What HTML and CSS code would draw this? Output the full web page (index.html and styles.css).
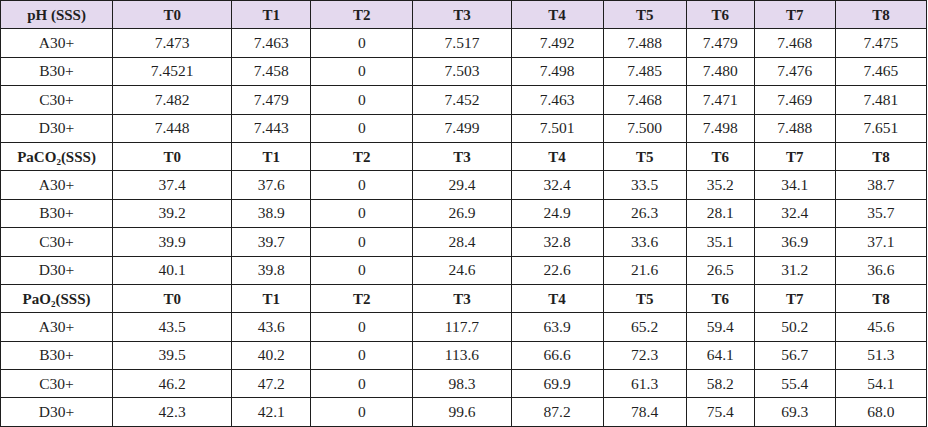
FILE: index.html
```html
<!DOCTYPE html>
<html>
<head>
<meta charset="utf-8">
<link rel="stylesheet" href="styles.css">
</head>
<body>
<table class="data">
<colgroup>
<col class="c0"><col class="c1"><col class="c2"><col class="c3"><col class="c4"><col class="c5"><col class="c6"><col class="c7"><col class="c8"><col class="c9">
</colgroup>
<tbody>
<tr class="head lav"><th>pH (SSS)</th><th>T0</th><th>T1</th><th>T2</th><th>T3</th><th>T4</th><th>T5</th><th>T6</th><th>T7</th><th>T8</th></tr>
<tr><td>A30+</td><td>7.473</td><td>7.463</td><td>0</td><td>7.517</td><td>7.492</td><td>7.488</td><td>7.479</td><td>7.468</td><td>7.475</td></tr>
<tr><td>B30+</td><td>7.4521</td><td>7.458</td><td>0</td><td>7.503</td><td>7.498</td><td>7.485</td><td>7.480</td><td>7.476</td><td>7.465</td></tr>
<tr><td>C30+</td><td>7.482</td><td>7.479</td><td>0</td><td>7.452</td><td>7.463</td><td>7.468</td><td>7.471</td><td>7.469</td><td>7.481</td></tr>
<tr><td>D30+</td><td>7.448</td><td>7.443</td><td>0</td><td>7.499</td><td>7.501</td><td>7.500</td><td>7.498</td><td>7.488</td><td>7.651</td></tr>
<tr class="head"><th>PaCO<sub>2</sub>(SSS)</th><th>T0</th><th>T1</th><th>T2</th><th>T3</th><th>T4</th><th>T5</th><th>T6</th><th>T7</th><th>T8</th></tr>
<tr><td>A30+</td><td>37.4</td><td>37.6</td><td>0</td><td>29.4</td><td>32.4</td><td>33.5</td><td>35.2</td><td>34.1</td><td>38.7</td></tr>
<tr><td>B30+</td><td>39.2</td><td>38.9</td><td>0</td><td>26.9</td><td>24.9</td><td>26.3</td><td>28.1</td><td>32.4</td><td>35.7</td></tr>
<tr><td>C30+</td><td>39.9</td><td>39.7</td><td>0</td><td>28.4</td><td>32.8</td><td>33.6</td><td>35.1</td><td>36.9</td><td>37.1</td></tr>
<tr><td>D30+</td><td>40.1</td><td>39.8</td><td>0</td><td>24.6</td><td>22.6</td><td>21.6</td><td>26.5</td><td>31.2</td><td>36.6</td></tr>
<tr class="head"><th>PaO<sub>2</sub>(SSS)</th><th>T0</th><th>T1</th><th>T2</th><th>T3</th><th>T4</th><th>T5</th><th>T6</th><th>T7</th><th>T8</th></tr>
<tr><td>A30+</td><td>43.5</td><td>43.6</td><td>0</td><td>117.7</td><td>63.9</td><td>65.2</td><td>59.4</td><td>50.2</td><td>45.6</td></tr>
<tr><td>B30+</td><td>39.5</td><td>40.2</td><td>0</td><td>113.6</td><td>66.6</td><td>72.3</td><td>64.1</td><td>56.7</td><td>51.3</td></tr>
<tr><td>C30+</td><td>46.2</td><td>47.2</td><td>0</td><td>98.3</td><td>69.9</td><td>61.3</td><td>58.2</td><td>55.4</td><td>54.1</td></tr>
<tr><td>D30+</td><td>42.3</td><td>42.1</td><td>0</td><td>99.6</td><td>87.2</td><td>78.4</td><td>75.4</td><td>69.3</td><td>68.0</td></tr>
</tbody>
</table>
</body>
</html>
```
FILE: styles.css
```css
html, body {
  margin: 0;
  padding: 0;
  background: #ffffff;
}
body {
  font-family: "Liberation Serif", "DejaVu Serif", serif;
  color: #1f1f1f;
}
.data {
  border-collapse: collapse;
  table-layout: fixed;
  width: 927px;
  margin-left: 0;
}
.c0 { width: 112px; }
.c1 { width: 119px; }
.c2 { width: 79px; }
.c3 { width: 102px; }
.c4 { width: 98px; }
.c5 { width: 92px; }
.c6 { width: 83px; }
.c7 { width: 68px; }
.c8 { width: 81px; }
.c9 { width: 91px; }
.data tr {
  height: 28.4px;
}
.data td, .data th {
  border: 1px solid #1e1e1e;
  padding: 0;
  text-align: center;
  vertical-align: middle;
  font-size: 15.5px;
  line-height: 18px;
}
.data th {
  font-weight: bold;
  font-size: 15px;
}
.head.lav th {
  background: #e4d9ee;
}
.data sub {
  font-size: 9px;
  vertical-align: -3px;
  line-height: 0;
}
```
